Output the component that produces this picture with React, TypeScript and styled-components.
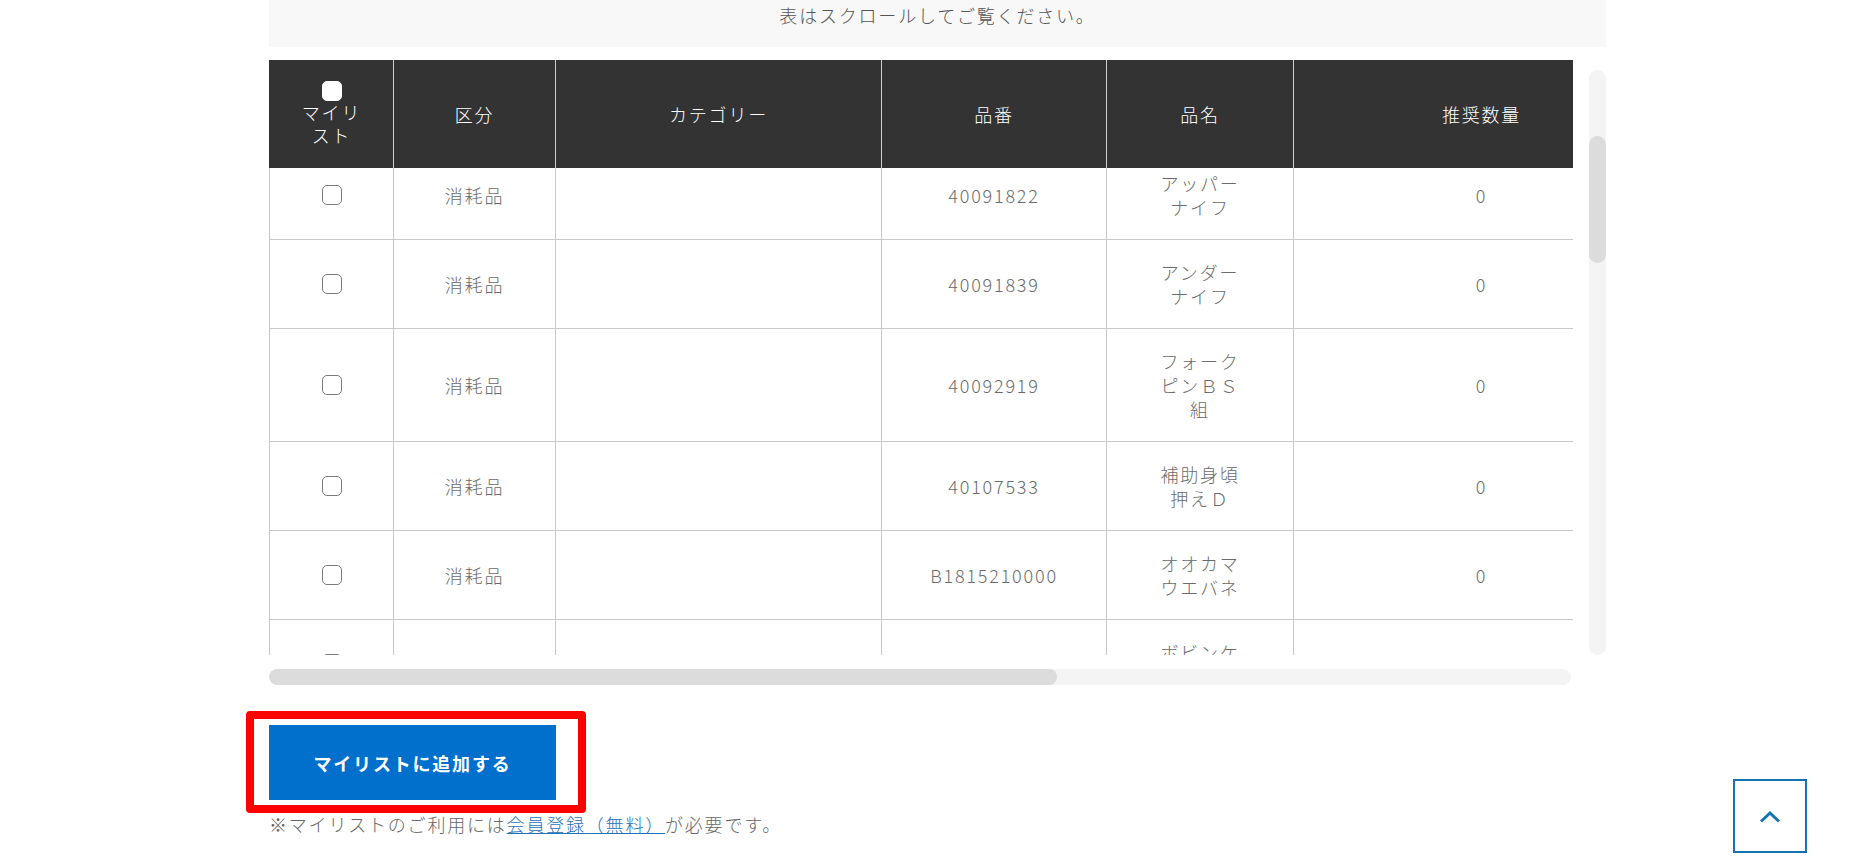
import { useLayoutEffect, useRef, useState } from "react";
import styled, { createGlobalStyle } from "styled-components";

type Part = { code: string; name: string };

// rows that are already scrolled past above the sticky header
const passedParts: Part[] = [
  { code: "40091760", name: "メスホルダー" },
  { code: "40091812", name: "ルーパーＡ組" },
  { code: "40091815", name: "ルーパーガイドＢ組" },
];

const parts: Part[] = [
  { code: "40091822", name: "アッパーナイフ" },
  { code: "40091839", name: "アンダーナイフ" },
  { code: "40092919", name: "フォークピンＢＳ組" },
  { code: "40107533", name: "補助身頃押えＤ" },
  { code: "B1815210000", name: "オオカマウエバネ" },
  { code: "B1816210000", name: "ボビンケース" },
  { code: "B1817210000", name: "針板ＢＳ組" },
  { code: "40108210", name: "送り歯ＢＳ組" },
  { code: "40108227", name: "押えスプリング" },
  { code: "40108234", name: "ルーパーホルダー" },
  { code: "40108241", name: "針止めネジ組" },
  { code: "40108258", name: "糸調子皿組" },
  { code: "40108265", name: "天秤クランク" },
  { code: "40108272", name: "布押え足組" },
  { code: "40108289", name: "針棒クランク" },
  { code: "40108296", name: "上メス止めネジ" },
  { code: "40108302", name: "下メスホルダー" },
  { code: "40108319", name: "ルーパー軸組" },
  { code: "40108326", name: "糸案内板Ａ" },
  { code: "40108333", name: "糸案内板Ｂ" },
  { code: "40108340", name: "差動送り歯" },
  { code: "40108357", name: "主送り歯組" },
  { code: "40108364", name: "針受けガード" },
  { code: "40108371", name: "ボビン押え" },
  { code: "40108388", name: "押え棒ＢＳ組" },
  { code: "40108395", name: "カマ止めネジ" },
];

const columns = [
  { key: "mylist", label: "マイリスト", width: 125 },
  { key: "type", label: "区分", width: 162 },
  { key: "category", label: "カテゴリー", width: 326 },
  { key: "code", label: "品番", width: 225 },
  { key: "name", label: "品名", width: 187 },
  { key: "qty", label: "推奨数量", width: 376 },
  { key: "unit", label: "単位", width: 377 },
  { key: "note", label: "備考", width: 377 },
];

const TABLE_WIDTH = columns.reduce((sum, c) => sum + c.width, 0);

const GlobalStyle = createGlobalStyle`
  body {
    margin: 0;
    background: #fff;
    font-family: "Noto Sans CJK JP", "Noto Sans", sans-serif;
    color: #666;
  }
`;

type Bars = { vSize: number; vPos: number; hSize: number; hPos: number };

const App = () => {
  const scrollerRef = useRef<HTMLDivElement>(null);
  const firstRowRef = useRef<HTMLTableRowElement>(null);
  const vTrackRef = useRef<HTMLDivElement>(null);
  const hTrackRef = useRef<HTMLDivElement>(null);
  const [bars, setBars] = useState<Bars>({ vSize: 0, vPos: 0, hSize: 0, hPos: 0 });

  useLayoutEffect(() => {
    const scroller = scrollerRef.current;
    const row = firstRowRef.current;
    if (!scroller || !row) return;

    // the list is shown scrolled a little, header stays on top
    const offset =
      row.getBoundingClientRect().top - scroller.getBoundingClientRect().top;
    scroller.scrollTop = offset - 91;
    scroller.scrollLeft = 0;

    const update = () => {
      const vLen = vTrackRef.current?.clientHeight ?? 0;
      const hLen = hTrackRef.current?.clientWidth ?? 0;
      const { scrollTop, scrollHeight, clientHeight } = scroller;
      const { scrollLeft, scrollWidth, clientWidth } = scroller;
      const vSize = (vLen * clientHeight) / scrollHeight;
      const hSize = (hLen * clientWidth) / scrollWidth;
      setBars({
        vSize,
        vPos: ((vLen - vSize) * scrollTop) / Math.max(1, scrollHeight - clientHeight),
        hSize,
        hPos: ((hLen - hSize) * scrollLeft) / Math.max(1, scrollWidth - clientWidth),
      });
    };
    update();
    scroller.addEventListener("scroll", update);
    return () => scroller.removeEventListener("scroll", update);
  }, []);

  const renderRow = (part: Part, i: number, isFirst = false) => (
    <tr key={part.code + i} ref={isFirst ? firstRowRef : undefined}>
      <S.Td>
        <CheckBox aria-label={`${part.name}をマイリストに追加`} />
      </S.Td>
      <S.Td>消耗品</S.Td>
      <S.Td></S.Td>
      <S.Td>{part.code}</S.Td>
      <S.Td>
        <S.NameText>{part.name}</S.NameText>
      </S.Td>
      <S.Td>0</S.Td>
      <S.Td>個</S.Td>
      <S.Td></S.Td>
    </tr>
  );

  return (
    <>
      <GlobalStyle />
      <S.Page>
        <S.Notice>表はスクロールしてご覧ください。</S.Notice>

        <S.TableFrame>
          <S.Scroller ref={scrollerRef}>
            <S.Table $width={TABLE_WIDTH}>
              <colgroup>
                {columns.map((c) => (
                  <S.Col key={c.key} $width={c.width} />
                ))}
              </colgroup>
              <thead>
                <tr>
                  {columns.map((c) => (
                    <S.Th key={c.key}>
                      {c.key === "mylist" && (
                        <CheckBox $onDark aria-label="すべて選択" />
                      )}
                      {c.label}
                    </S.Th>
                  ))}
                </tr>
              </thead>
              <tbody>
                {passedParts.map((p, i) => renderRow(p, i))}
                {parts.map((p, i) => renderRow(p, i + 10, i === 0))}
              </tbody>
            </S.Table>
          </S.Scroller>
          <S.VTrack ref={vTrackRef}>
            <S.Thumb style={{ height: bars.vSize, marginTop: bars.vPos }} />
          </S.VTrack>
          <S.HTrack ref={hTrackRef}>
            <S.Thumb style={{ width: bars.hSize, marginLeft: bars.hPos }} />
          </S.HTrack>
        </S.TableFrame>

        <S.Actions>
          <S.AddButton type="button">マイリストに追加する</S.AddButton>
          <S.Highlight />
        </S.Actions>
        <S.Note>
          ※マイリストのご利用には<S.Link href="#">会員登録（無料）</S.Link>が必要です。
        </S.Note>
      </S.Page>

      <S.PageTop type="button" aria-label="ページトップへ">
        <svg width="22" height="13" viewBox="0 0 22 13" fill="none">
          <polyline
            points="2,11.5 11,3 20,11.5"
            stroke="currentColor"
            strokeWidth="3"
          />
        </svg>
      </S.PageTop>
    </>
  );
};
export default App;

const Page = styled.main`
  width: 1337px;
  margin-left: 269px;
`;

const Notice = styled.p`
  margin: 0;
  padding: 4px 0 20px;
  background: #f8f8f8;
  color: #555;
  text-align: center;
  font-size: 18px;
  font-weight: 300;
  line-height: 23px;
  letter-spacing: 0.1em;
`;

const TableFrame = styled.div`
  display: grid;
  grid-template-columns: 1304px 33px;
  grid-template-rows: 595px 30px;
  margin-top: 13px;
`;

const Scroller = styled.div`
  min-height: 0;
  overflow: auto;
  scrollbar-width: none;
  &::-webkit-scrollbar {
    display: none;
  }
`;

const VTrack = styled.div`
  margin: 10px 0 0 16px;
  width: 17px;
  border-radius: 9px;
  background: #f4f4f4;
  overflow: hidden;
`;

const HTrack = styled.div`
  display: flex;
  margin: 14px 2px 0 0;
  height: 16px;
  border-radius: 8px;
  background: #f4f4f4;
  overflow: hidden;
`;

const Thumb = styled.div`
  flex: none;
  min-width: 100%;
  min-height: 100%;
  border-radius: 9px;
  background: #dcdcdc;
  ${HTrack} & {
    min-width: 0;
  }
  ${VTrack} & {
    min-height: 0;
  }
`;

const Table = styled.table<{ $width: number }>`
  width: ${({ $width }) => $width}px;
  table-layout: fixed;
  border-collapse: separate;
  border-spacing: 0;
  font-size: 18px;
  font-weight: 300;
  line-height: 24px;
  letter-spacing: 0.1em;
`;

const Col = styled.col<{ $width: number }>`
  width: ${({ $width }) => $width}px;
`;

const Th = styled.th`
  position: sticky;
  top: 0;
  z-index: 1;
  height: 108px;
  padding: 0 25px;
  background: #333;
  color: #fff;
  font-weight: 300;
  line-height: 23px;
  text-align: center;
  vertical-align: middle;
  border-right: 1px solid #cfcfcf;
  &:first-child {
    border-left: 1px solid #333;
  }
`;

const Td = styled.td`
  padding: 20px 10px;
  text-align: center;
  vertical-align: middle;
  color: #6b6b6b;
  border-right: 1px solid #c8c8c8;
  border-bottom: 1px solid #c8c8c8;
  &:first-child {
    border-left: 1px solid #c8c8c8;
  }
`;

const CheckBox = styled.input.attrs({ type: "checkbox" })<{ $onDark?: boolean }>`
  appearance: none;
  display: block;
  box-sizing: border-box;
  width: 20px;
  height: 20px;
  margin: 0 auto;
  background: #fff;
  border: 1px solid ${({ $onDark }) => ($onDark ? "#fff" : "#7a7a7a")};
  border-radius: 5px;
`;

const NameText = styled.span`
  display: block;
  width: 80px;
  margin: 0 auto;
`;

const Actions = styled.div`
  position: relative;
  width: 287px;
  margin-top: 40px;
`;

const AddButton = styled.button`
  display: block;
  width: 287px;
  height: 75px;
  padding: 0;
  border: 0;
  background: #0070cc;
  color: #fff;
  font-family: "Noto Sans CJK JP", sans-serif;
  font-size: 18px;
  font-weight: 700;
  letter-spacing: 0.1em;
  cursor: pointer;
`;

// red frame drawn over the button
const Highlight = styled.span`
  position: absolute;
  left: -23px;
  top: -14px;
  right: -30px;
  bottom: -13px;
  border: 8px solid #f00;
  border-radius: 4px;
  pointer-events: none;
`;

const Note = styled.p`
  margin: 13px 0 0;
  color: #666;
  font-size: 18px;
  font-weight: 300;
  line-height: 23px;
  letter-spacing: 0.1em;
`;

const Link = styled.a`
  color: #1f72b8;
  text-decoration: underline;
`;

const PageTop = styled.button`
  position: fixed;
  right: 62px;
  bottom: 9px;
  width: 74px;
  height: 74px;
  box-sizing: border-box;
  display: flex;
  align-items: center;
  justify-content: center;
  padding: 0;
  background: #fff;
  border: 2px solid #1572b6;
  color: #1572b6;
  cursor: pointer;
`;

const S = {
  Page,
  Notice,
  TableFrame,
  Scroller,
  VTrack,
  HTrack,
  Thumb,
  Table,
  Col,
  Th,
  Td,
  NameText,
  Actions,
  AddButton,
  Highlight,
  Note,
  Link,
  PageTop,
};
